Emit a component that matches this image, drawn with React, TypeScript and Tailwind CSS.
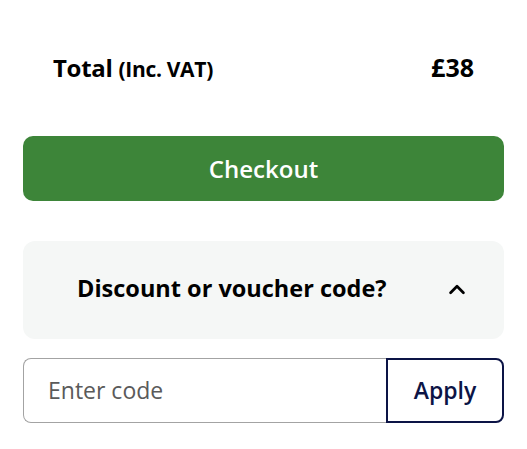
import React from 'react';

const App: React.FC = () => {
  return (
    <div className="w-[527px] h-[449px] bg-white font-['Open_Sans',sans-serif] text-black">
      <div className="px-[23px] pt-[49px]">
        <div className="flex items-baseline justify-between h-[37px] px-[30px]">
          <span className="text-[24px] font-bold tracking-[-0.3px]">
            Total <span className="text-[21px] font-bold">(Inc. VAT)</span>
          </span>
          <span className="text-[25px] font-bold">£38</span>
        </div>

        <button className="mt-[50px] w-full h-[65px] rounded-[10px] bg-[#3d8539] text-white text-[24px] font-semibold">
          Checkout
        </button>

        <div className="mt-[40px] h-[98px] rounded-[12px] bg-[#f5f7f6] flex items-center justify-between pl-[54px] pr-[36px]">
          <span className="text-[23.5px] font-bold -mt-[3px]">Discount or voucher code?</span>
          <svg width="22" height="22" viewBox="0 0 24 24" fill="none" stroke="#000" strokeWidth="3" strokeLinecap="round" strokeLinejoin="round">
            <path d="M5 15l7-7 7 7" />
          </svg>
        </div>

        <div className="mt-[19px] flex h-[65px]">
          <input
            placeholder="Enter code"
            className="flex-1 min-w-0 rounded-l-[8px] border border-r-0 border-[#a3a3a3] px-[24px] text-[23px] placeholder:text-[#5a5a5a] outline-none"
          />
          <button className="w-[118px] rounded-r-[8px] border-2 border-[#0c1446] text-[#0c1446] text-[23px] font-semibold">
            Apply
          </button>
        </div>
      </div>
    </div>
  );
};

export default App;
